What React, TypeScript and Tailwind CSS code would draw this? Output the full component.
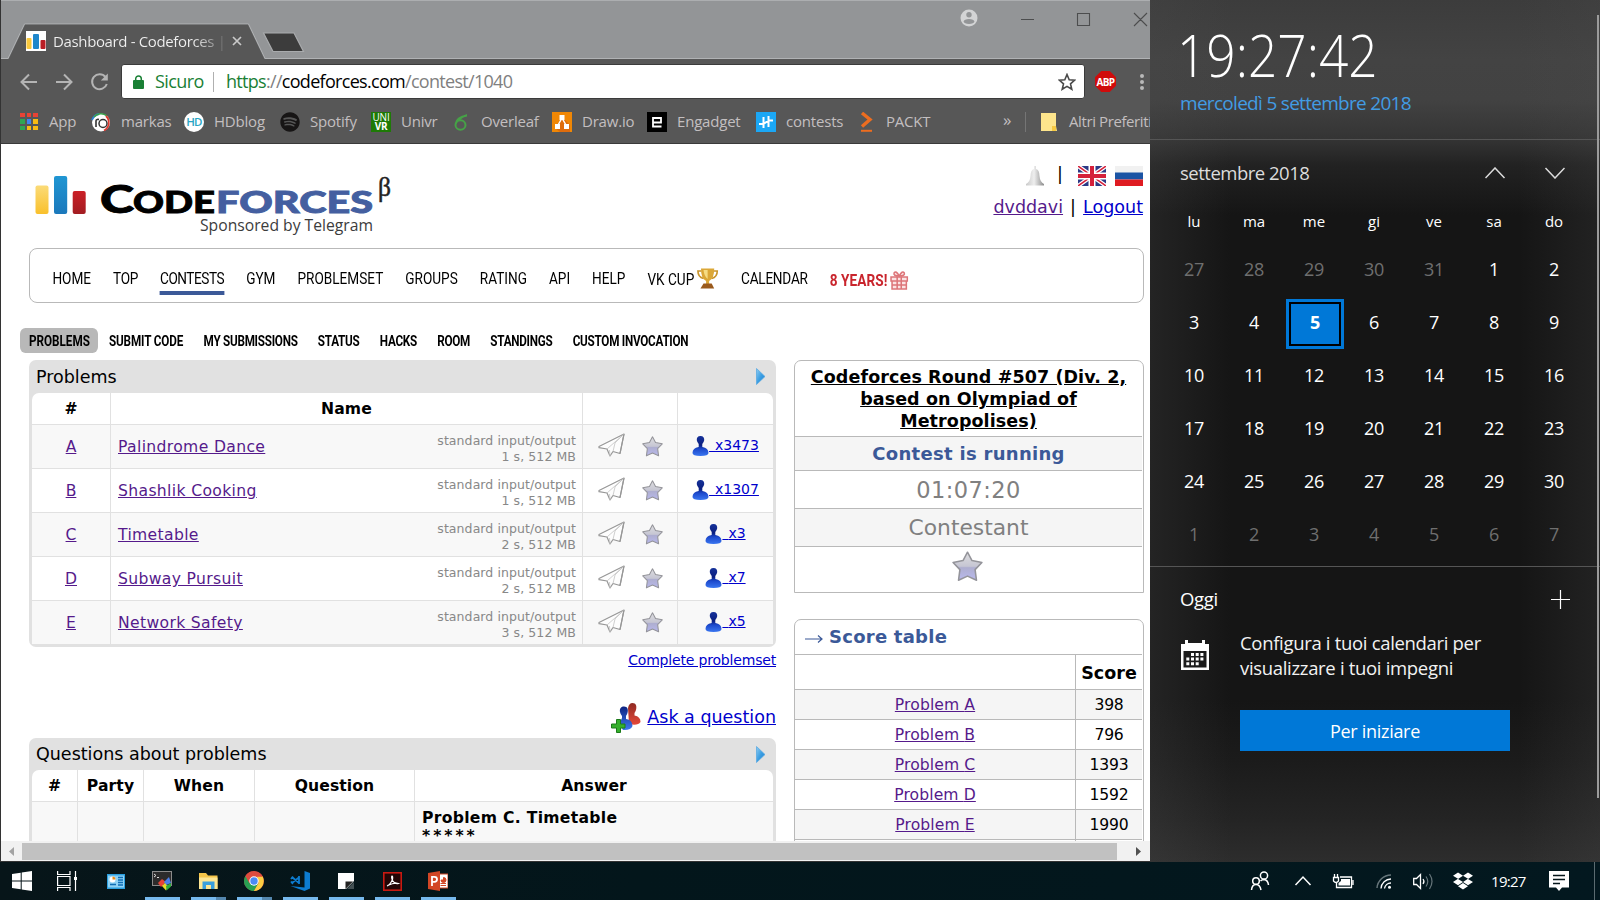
import React from "react";
import { FaDropbox, FaSpotify } from "react-icons/fa";

/* ---------- browser chrome ---------- */

const Bars = ({ className }: { className: string }) => (
  <svg viewBox="0 0 20 20" className={className}>
    <rect width="20" height="20" fill="#fff" />
    <rect x="0.5" y="7" width="5" height="11" rx="1" fill="#f9c83d" />
    <rect x="7" y="3" width="6" height="15" rx="1" fill="#1f87cb" />
    <rect x="14.5" y="9" width="5" height="9" rx="1" fill="#b81e25" />
  </svg>
);

function TitleBar() {
  return (
    <div className="relative h-[59px] bg-[#939597] border-t border-[#acaeb0] flex">
      <svg className="absolute left-0 -top-px" width="1149" height="59" viewBox="1 0 1149 59">
        <path d="M0 58.5H8L24.5 24H248.5L265 58.5H1150" fill="none" stroke="#b0b2b4" />
        <path d="M8.5 59L25 24.5H248L264.5 59Z" fill="#575757" />
        <path d="M263.5 33H294L303.5 51.5H273Z" fill="#3c3c3c" stroke="#a9abad" strokeWidth="1.2" />
        <circle cx="969" cy="18" r="8.5" fill="#d3d4d5" />
        <circle cx="969" cy="14.7" r="2.7" fill="#939597" />
        <ellipse cx="969" cy="21.5" rx="5.3" ry="2.6" fill="#939597" />
        <path d="M1021 19.5H1034M1077.500 13.500H1089.500V25.500H1077.500ZM1134 13L1147 26M1147 13L1134 26" fill="none" stroke="#4c4d4e" strokeWidth="1.1" />
      </svg>
      <div className="relative flex h-[36px] mt-[22px] ml-[25px] w-[222px] items-center">
        <Bars className="size-5 shrink-0" />
        <span className="ml-[7px] w-[170px] shrink-0 whitespace-nowrap overflow-hidden text-[15px] leading-5 tracking-[-0.36px] text-transparent bg-clip-text bg-[linear-gradient(to_right,#f1f1f1_82%,#f1f1f100_104%)]">
          Dashboard - Codeforces |
        </span>
        <svg className="ml-[9px] shrink-0" width="10" height="10" viewBox="0 0 10 10">
          <path d="M1 1L9 9M9 1L1 9" stroke="#c9c9c9" strokeWidth="1.7" />
        </svg>
      </div>
    </div>
  );
}

function AddressBar() {
  return (
    <div className="h-[45px] flex items-center">
      <svg className="ml-[19px] shrink-0" width="92" height="20" viewBox="20 71 92 20" fill="none" stroke="#b4b4b4" strokeWidth="2">
        <path d="M37 81H22M29 73.500L21.500 81L29 88.500" />
        <path d="M56 81H71M64 73.500L71.500 81L64 88.500" />
        <path d="M105.500 76A7.500 7.500 0 1 0 106.800 83" />
        <path d="M107.800 72.500V79.500H100.800Z" fill="#b4b4b4" stroke="none" />
      </svg>
      <div className="ml-[9px] w-[964px] h-[35px] rounded-[3px] border border-[#3b3b3b] bg-white flex items-center">
        <svg className="ml-[11px]" width="11" height="14" viewBox="0 0 11 14">
          <rect y="5" width="11" height="9" rx="1" fill="#1a8035" />
          <path d="M2.700 6V3.800a2.800 2.800 0 0 1 5.600 0V6" fill="none" stroke="#1a8035" strokeWidth="1.500" />
        </svg>
        <span className="ml-[11px] w-[48px] text-[18px] tracking-[-0.6px] text-[#1a8035]">Sicuro</span>
        <span className="ml-[10px] w-px h-5 bg-[#b0b0b0]" />
        <span className="ml-[12px] text-[18px] tracking-[-0.7px] text-[#808080] whitespace-nowrap">
          <span className="text-[#1a8035]">https</span>://<span className="text-black">codeforces.com</span>/contest/1040
        </span>
        <svg className="ml-auto mr-[8px]" width="18" height="18" viewBox="0 0 18 18">
          <path d="M9 1.500L11.200 6.700L16.700 7.200L12.500 10.900L13.800 16.300L9 13.400L4.200 16.300L5.500 10.900L1.300 7.200L6.800 6.700Z" fill="none" stroke="#4a4a4a" strokeWidth="1.600" />
        </svg>
      </div>
      <div className="ml-[10px] size-[21px] bg-[#d00b0b] flex items-center justify-center [clip-path:polygon(30%_0,70%_0,100%_30%,100%_70%,70%_100%,30%_100%,0_70%,0_30%)]">
        <span className="text-[10px] font-bold leading-none text-white tracking-[-0.6px]">ABP</span>
      </div>
      <div className="ml-[24px] flex flex-col gap-[2px]">
        <i className="size-1 rounded-full bg-[#b9b9b9]" />
        <i className="size-1 rounded-full bg-[#b9b9b9]" />
        <i className="size-1 rounded-full bg-[#b9b9b9]" />
      </div>
    </div>
  );
}

const appColors = ["#e94335", "#e94335", "#e94335", "#30a552", "#3f83f2", "#f9bb14", "#30a552", "#f9bb14", "#f9bb14"];

const bookmarks: { label: string; width: string; icon: React.ReactNode }[] = [
  {
    label: "App",
    width: "w-[72px]",
    icon: (
      <span className="grid grid-cols-3 gap-[2px]">
        {appColors.map((c, i) => (
          <i key={i} className="size-[4.500px]" style={{ background: c }} />
        ))}
      </span>
    ),
  },
  {
    label: "markas",
    width: "w-[93px]",
    icon: (
      <svg viewBox="0 0 20 20" className="size-5">
        <circle cx="10" cy="10.500" r="9" fill="#fff" />
        <path d="M1 8A9.500 9.500 0 0 1 8 2" stroke="#2d7fd0" strokeWidth="1.800" fill="none" />
        <path d="M3 5A9 9 0 0 1 16 4" stroke="#3ba24b" strokeWidth="1.600" fill="none" />
        <path d="M15 4A9 9 0 0 1 13 18.500" stroke="#dd3a31" strokeWidth="1.800" fill="none" />
        <path d="M5 15V9Q5 7 8 7.500" stroke="#333" strokeWidth="1.600" fill="none" />
        <circle cx="12" cy="11.500" r="4" stroke="#333" strokeWidth="1.500" fill="none" />
      </svg>
    ),
  },
  {
    label: "HDblog",
    width: "w-[96px]",
    icon: (
      <span className="size-5 rounded-full bg-white text-[#29a5c4] text-[11.500px] tracking-[-0.7px] font-semibold flex items-center justify-center">HD</span>
    ),
  },
  {
    label: "Spotify",
    width: "w-[91px]",
    icon: <FaSpotify className="size-5 text-[#171515]" />,
  },
  {
    label: "Univr",
    width: "w-[80px]",
    icon: (
      <span className="size-5 bg-[#1e7a06] text-white text-[10px] leading-[9px] flex flex-col items-center justify-center">
        <span>UNI</span>
        <b>VR</b>
      </span>
    ),
  },
  {
    label: "Overleaf",
    width: "w-[101px]",
    icon: (
      <svg viewBox="0 0 20 20" className="size-5" fill="none" stroke="#46a247" strokeWidth="2">
        <ellipse cx="9.500" cy="13" rx="5" ry="4.800" />
        <path d="M4.700 12Q5.500 5 16 3.500Q11 4 8 8" />
      </svg>
    ),
  },
  {
    label: "Draw.io",
    width: "w-[95px]",
    icon: (
      <svg viewBox="0 0 20 20" className="size-5">
        <rect width="20" height="20" fill="#f08705" />
        <path d="M10 5L18 13V20H8L3 16Z" fill="#df6c0c" />
        <path d="M10 6L5.500 14M10 6L14.500 14" stroke="#fff" strokeWidth="1.500" />
        <rect x="7.500" y="3" width="5" height="5" fill="#fff" />
        <rect x="3" y="12" width="5" height="5" fill="#fff" />
        <rect x="12" y="12" width="5" height="5" fill="#fff" />
      </svg>
    ),
  },
  {
    label: "Engadget",
    width: "w-[109px]",
    icon: (
      <svg viewBox="0 0 20 20" className="size-5">
        <rect width="20" height="20" fill="#000" />
        <path d="M6 10.500H14V6H6V14.500H14.500" stroke="#fff" strokeWidth="1.800" fill="none" />
      </svg>
    ),
  },
  {
    label: "contests",
    width: "w-[100px]",
    icon: (
      <svg viewBox="0 0 20 20" className="size-5">
        <rect width="20" height="20" fill="#1ba7f5" />
        <path d="M7.500 5V16M12.500 4V15M3 12H8M7.500 12L12.500 8.500M12 8.500H17" stroke="#fff" strokeWidth="2" />
      </svg>
    ),
  },
  {
    label: "PACKT",
    width: "w-[80px]",
    icon: (
      <svg viewBox="0 0 20 20" className="size-5" stroke="#ec6d20" fill="none">
        <path d="M6 1L14 7.500L6 14.500" strokeWidth="3.400" />
        <path d="M5 18.800H16" strokeWidth="2" />
      </svg>
    ),
  },
];

function Bookmarks() {
  return (
    <div className="h-[40px] border-b border-[#3a3a3a] flex items-center pl-[18px] pb-[4px] overflow-hidden text-[15px] tracking-[-0.2px] text-[#c3bfc0] whitespace-nowrap">
      {bookmarks.map((b) => (
        <div key={b.label} className={`${b.width} shrink-0 flex items-center gap-[10px]`}>
          <span className="w-5 flex justify-center">{b.icon}</span>
          <span>{b.label}</span>
        </div>
      ))}
      <span className="ml-[67px] text-[17px] leading-5 w-[22px] shrink-0 pb-1">»</span>
      <span className="w-px h-5 bg-[#757575] shrink-0" />
      <svg className="ml-[15px] shrink-0" width="16" height="18" viewBox="0 0 16 18">
        <path d="M0 0H15V13L16 18H0Z" fill="#fde58c" />
        <path d="M11 18V13H15V18" fill="#f6c942" />
      </svg>
      <span className="ml-[12px] shrink-0 tracking-[-0.4px]">Altri Preferiti</span>
    </div>
  );
}

/* ---------- page ---------- */

const CfLogo = () => (
  <svg className="ml-[34px] mt-[30px]" width="360" height="66" viewBox="35 174 360 66">
    <defs>
      <linearGradient id="ly" x2="0" y2="1"><stop stopColor="#fbdb78" /><stop offset="1" stopColor="#f9c02b" /></linearGradient>
      <linearGradient id="lb" x2="0" y2="1"><stop stopColor="#2096d3" /><stop offset="1" stopColor="#1b78bb" /></linearGradient>
      <linearGradient id="lr" x2="0" y2="1"><stop stopColor="#cb2027" /><stop offset="1" stopColor="#a21d22" /></linearGradient>
    </defs>
    <rect x="35.500" y="185.500" width="13" height="28.500" rx="2" fill="url(#ly)" />
    <rect x="54" y="176" width="13.200" height="38" rx="2" fill="url(#lb)" />
    <rect x="72.700" y="191" width="13" height="23" rx="2" fill="url(#lr)" />
    <g fontFamily="Lato, sans-serif" fontWeight="900" strokeWidth="0.900">
      <text x="100" y="213.300" fontSize="38" textLength="34" lengthAdjust="spacingAndGlyphs" stroke="#000">C</text>
      <text x="133" y="213.300" fontSize="31" textLength="82" lengthAdjust="spacingAndGlyphs" stroke="#000">ODE</text>
      <text x="216" y="213.300" fontSize="31" textLength="157" lengthAdjust="spacingAndGlyphs" fill="#445fa0" stroke="#445fa0">FORCES</text>
    </g>
    <text x="378" y="196" fontFamily="Liberation Serif, serif" fontSize="27" textLength="13" lengthAdjust="spacingAndGlyphs" fill="#222" stroke="#222" strokeWidth="0.500">β</text>
    <text x="200" y="231" fontFamily="Open Sans, sans-serif" fontSize="17" fontWeight="500" textLength="173" lengthAdjust="spacingAndGlyphs" fill="#3c3c3c">Sponsored by Telegram</text>
  </svg>
);

function UserBox() {
  return (
    <div className="ml-auto mr-[6px] mt-[20px] flex flex-col items-end text-[17.500px]">
      <div className="flex h-[24px] items-center pr-px">
        <svg width="20" height="22" viewBox="0 0 20 22">
          <defs><linearGradient id="bell"><stop stopColor="#c9c9c9" /><stop offset=".45" stopColor="#eee" /><stop offset="1" stopColor="#8d8d8d" /></linearGradient></defs>
          <path d="M9 1H11V4Q14.500 5 14.500 11Q15 17 19 19V20.500H1V19Q5 17 5.500 11Q5.500 5 9 4Z" fill="url(#bell)" />
        </svg>
        <span className="ml-[12px] leading-5 w-[6px] pb-1">|</span>
        <svg className="ml-[15px]" width="28" height="20" viewBox="0 0 28 20">
          <rect width="28" height="20" fill="#2c3a86" />
          <path d="M0 0L28 20M28 0L0 20" stroke="#fff" strokeWidth="4" />
          <path d="M0 0L28 20M28 0L0 20" stroke="#d5203a" strokeWidth="1.500" />
          <path d="M14 0V20M0 10H28" stroke="#fff" strokeWidth="7" />
          <path d="M14 0V20M0 10H28" stroke="#d5203a" strokeWidth="4" />
        </svg>
        <svg className="ml-[9px]" width="28" height="20" viewBox="0 0 28 20">
          <rect width="28" height="7" fill="#f1f1f1" />
          <rect y="6.500" width="28" height="7" fill="#1b54a4" />
          <rect y="13.500" width="28" height="6.500" fill="#df1b21" />
        </svg>
      </div>
      <div className="mt-[7px] pr-px leading-6 whitespace-pre">
        <a className="underline text-[#551a8b]">dvddavi</a><span className="px-[1.500px]"> | </span><a className="underline text-[#0000cc]">Logout</a>
      </div>
    </div>
  );
}

const Trophy = () => (
  <svg width="28" height="21" viewBox="0 0 22 21" preserveAspectRatio="none">
    <path d="M5 3H1.500Q1.500 9 7 10.500M17 3H20.500Q20.500 9 15 10.500" fill="none" stroke="#c9942a" strokeWidth="1.600" />
    <path d="M4.500 0.500H17.500Q17.500 11 12.500 13V16H9.500V13Q4.500 11 4.500 0.500Z" fill="#dba737" />
    <path d="M7 2H11V11Q7.500 8 7 2Z" fill="#f6dc83" />
    <path d="M7 15.500H15L17.500 20.500H4Z" fill="#9a5a1c" />
  </svg>
);

const Gift = () => (
  <svg width="23" height="20" viewBox="0 0 18 20" preserveAspectRatio="none" fill="#fbe3e3" stroke="#dd7579" strokeWidth="1.500">
    <path d="M1 7H17V11H1ZM2 11H16V19H2ZM7 7V19M11 7V19M2 15H16" />
    <path d="M9 6Q3 6 4 3Q6 0 9 6Q12 0 14 3Q15 6 9 6" />
  </svg>
);

function Menu() {
  return (
    <nav className="ml-[28px] w-[1115px] h-[55px] shrink-0 rounded-[8px] border border-[#b9b9b9]">
      <div className="origin-left scale-x-[0.800] w-[1300px] h-full pl-[28px] pt-[5px] flex items-center gap-[27.500px] font-['Roboto',sans-serif] text-[17px] leading-6 whitespace-nowrap">
        <a>HOME</a>
        <a className="tracking-[-0.4px]">TOP</a>
        <a className="border-b-4 border-[#3b5998] h-[34px] mt-[-1px] pt-[7px] leading-[20px] tracking-[-0.550px]">CONTESTS</a>
        <a>GYM</a>
        <a>PROBLEMSET</a>
        <a>GROUPS</a>
        <a>RATING</a>
        <a>API</a>
        <a>HELP</a>
        <a className="flex items-center gap-[3px] pt-px">VK CUP <Trophy /></a>
        <a className="tracking-[-0.300px]">CALENDAR</a>
        <a className="flex items-center gap-[3px] pt-[3px] font-bold text-[#c9252d] tracking-[0.1px]">8 YEARS! <Gift /></a>
      </div>
    </nav>
  );
}

const second = ["MY SUBMISSIONS", "STATUS", "HACKS", "ROOM", "STANDINGS", "CUSTOM INVOCATION"];

function SubMenu() {
  return (
    <div className="mt-[25px] ml-[19px] h-[25px] shrink-0 origin-left scale-x-[0.780] w-[1300px] flex items-center gap-[26px] font-['Roboto',sans-serif] font-bold text-[15px] whitespace-nowrap">
      <a className="h-[25px] w-[100px] flex items-center justify-center rounded-[7px/6px] bg-[#b8b8b8] -mr-[12px] pt-[2px] pl-px">PROBLEMS</a>
      <a className="pt-[2px] tracking-[-0.150px]">SUBMIT CODE</a>
      {second.map((s) => (
        <a key={s} className="pt-[2px] tracking-[-0.330px]">{s}</a>
      ))}
    </div>
  );
}

const BlueArrow = () => (
  <svg width="10" height="17" viewBox="0 0 10 17">
    <defs><linearGradient id="ba" x2="1" y2="1"><stop stopColor="#8fcdf2" /><stop offset=".5" stopColor="#3b9ee2" /><stop offset="1" stopColor="#1f7fd0" /></linearGradient></defs>
    <path d="M0.500 0.500L9 8.500L0.500 16.500Z" fill="url(#ba)" stroke="#5aa9e2" strokeWidth=".8" />
  </svg>
);

const Plane = () => (
  <svg width="27" height="24" viewBox="0 0 27 24" fill="#fdfdfd" stroke="#979797" strokeWidth="1.200" strokeLinejoin="round">
    <path d="M26 1L1 13.500V14.700L9 16L12 23L15 18.500L22 20.500Z" />
    <path d="M26 1L9 16M15 18.500L17 10L26 1M12 23L11.500 17" fill="none" stroke="#c9c9c9" strokeWidth=".9" />
    <path d="M26 1L22 20.500" />
  </svg>
);

const Star = ({ className }: { className: string }) => (
  <svg viewBox="0 0 20 20" className={className}>
    <defs><linearGradient id="st" x2="0" y2="1"><stop stopColor="#dededf" /><stop offset=".5" stopColor="#c6c6d3" /><stop offset=".55" stopColor="#aeaecf" /><stop offset="1" stopColor="#b9b9ee" /></linearGradient></defs>
    <path d="M10 0.800L12.900 6.200L19.300 7.400L14.900 12L15.800 18.900L10 16.200L4.200 18.900L5.100 12L0.700 7.400L7.100 6.200Z" fill="url(#st)" stroke="#94949a" strokeWidth="1" strokeLinejoin="round" />
  </svg>
);

const Person = () => (
  <svg width="17" height="20" viewBox="0 0 17 20">
    <defs><linearGradient id="pb" x2="0" y2="1"><stop stopColor="#16329a" /><stop offset=".45" stopColor="#0b1f80" /><stop offset=".65" stopColor="#1c49cc" /><stop offset="1" stopColor="#3a76f0" /></linearGradient></defs>
    <path d="M8.500 0C11.300 0 12.500 2 12.200 4.300Q11.800 6.500 10.300 8V11Q16.500 12 16.500 17Q16.500 20 8.500 20Q0.500 20 0.500 17Q0.500 12 6.700 11V8Q5.200 6.500 4.800 4.300C4.500 2 5.700 0 8.500 0Z" fill="url(#pb)" />
  </svg>
);

const problems = [
  ["A", "Palindrome Dance", "1 s, 512 MB", "x3473"],
  ["B", "Shashlik Cooking", "1 s, 512 MB", "x1307"],
  ["C", "Timetable", "2 s, 512 MB", "x3"],
  ["D", "Subway Pursuit", "2 s, 512 MB", "x7"],
  ["E", "Network Safety", "3 s, 512 MB", "x5"],
];

function ProblemsTable() {
  return (
    <section className="h-[287px] rounded-[7px] bg-[#e1e1e1] px-[3px]">
      <div className="h-[33px] flex items-center justify-between pl-1 pr-[7px] text-[17.500px]">
        <span className="pt-px">Problems</span> <BlueArrow />
      </div>
      <div className="h-[251px] rounded-t-[7px] bg-white overflow-hidden text-[15.600px]">
        <div className="h-[31px] grid grid-cols-[79px_472px_95px_95px] font-bold text-center leading-[33px]">
          <span className="border-r border-[#e1e1e1]">#</span>
          <span className="border-r border-[#e1e1e1] tracking-[0.100px]">Name</span>
          <span className="border-r border-[#e1e1e1]" />
          <span />
        </div>
        {problems.map(([id, name, limits, count]) => (
          <div key={id} className="h-11 grid grid-cols-[79px_472px_95px_95px] border-t border-[#e1e1e1] odd:bg-white even:bg-[#f8f8f8]">
            <span className="border-r border-[#e1e1e1] flex items-center justify-center pt-[3px]"><a className="underline text-[#551a8b]">{id}</a></span>
            <span className="border-r border-[#e1e1e1] flex items-center pl-[7px] pr-[6px] pt-[3px]">
              <a className="underline text-[#551a8b] tracking-[0.350px]">{name}</a>
              <span className="ml-auto text-right text-[12.500px] leading-4 text-[#888] pt-[1px] tracking-[0.080px]">standard input/output<br />{limits}</span>
            </span>
            <span className="border-r border-[#e1e1e1] flex items-center pl-[15px] gap-[17px]"><span className="-mt-1"><Plane /></span><Star className="size-[21px] mt-[-1px]" /></span>
            <span className="flex items-center justify-center text-[14px] pb-[2px]">
              <Person />
              <a className="underline text-[#0000cc] whitespace-pre [word-spacing:1.500px]"> {count}</a>
            </span>
          </div>
        ))}
      </div>
    </section>
  );
}

const AskIcon = () => (
  <svg width="30" height="30" viewBox="0 0 30 30">
    <defs>
      <linearGradient id="ar" x2="0" y2="1"><stop stopColor="#8f2a22" /><stop offset="1" stopColor="#e5483a" /></linearGradient>
      <linearGradient id="ab" x2="0" y2="1"><stop stopColor="#0d2280" /><stop offset="1" stopColor="#3f7af0" /></linearGradient>
    </defs>
    <path d="M21.500 0C25 0 25.800 3 25.200 6Q24.800 8.500 23.500 10V12.500Q29.500 13.500 29.500 19Q27 23 18 21L17 5Q18 0 21.500 0Z" fill="url(#ar)" />
    <path d="M13 3.500C16.500 3.500 17.300 6.500 16.700 9Q16.300 11.500 15 13V16Q21.500 17 21.500 23Q20 27.500 12 27L8 21L11 15V13Q9.500 11.500 9 9C8.500 6 9.500 3.500 13 3.500Z" fill="url(#ab)" />
    <path d="M5.500 16.500H9.500V21H14V25H9.500V29.500H5.500V25H0.500V21H5.500Z" fill="#35b02c" stroke="#1c7a1a" />
  </svg>
);

function QuestionsTable() {
  return (
    <section className="h-[120px] rounded-t-[7px] bg-[#e1e1e1] px-[3px]">
      <div className="h-[32px] flex items-center justify-between pl-1 pr-[7px] text-[17.500px]">
        <span className="pt-px">Questions about problems</span> <BlueArrow />
      </div>
      <div className="rounded-t-[7px] bg-white overflow-hidden text-[15.600px] font-bold">
        <div className="h-[31px] grid grid-cols-[46px_66px_111px_160px_358px] text-center leading-[33px]">
          {["#", "Party", "When", "Question", "Answer"].map((h) => (
            <span key={h} className="border-r border-[#e1e1e1] last:border-0 tracking-[0.100px]">{h}</span>
          ))}
        </div>
        <div className="h-[60px] grid grid-cols-[46px_66px_111px_160px_358px] border-t border-[#e1e1e1] bg-[#f8f8f8]">
          <span className="border-r border-[#e1e1e1]" />
          <span className="border-r border-[#e1e1e1]" />
          <span className="border-r border-[#e1e1e1]" />
          <span className="border-r border-[#e1e1e1]" />
          <span className="pl-[7px] pt-[7px] leading-[18px] tracking-[0.300px]">Problem C. Timetable<br /><span className="tracking-[3px]">*****</span></span>
        </div>
      </div>
    </section>
  );
}

const scores = [["A", "398"], ["B", "796"], ["C", "1393"], ["D", "1592"], ["E", "1990"], ["F", "2388"]];

function Sidebar() {
  return (
    <aside className="w-[350px] ml-[18px] flex flex-col text-center">
      <div className="h-[233px] border border-[#b9b9b9] rounded-t-[7px] pr-px">
        <div className="h-[75px] pt-[5px] text-[17.500px] leading-[22px] font-bold underline tracking-[0.090px]">
          Codeforces Round #507 (Div. 2,<br />based on Olympiad of<br />Metropolises)
        </div>
        <div className="h-[34px] border-t border-[#b9b9b9] bg-[#f5f5f5] text-[18px] leading-[34px] font-bold text-[#3b5998] tracking-[0.300px]">Contest is running</div>
        <div className="h-[38px] border-t border-[#b9b9b9] text-[22.500px] leading-[38px] text-[#808080] tracking-[0.400px]">01:07:20</div>
        <div className="h-[38px] border-t border-[#b9b9b9] bg-[#f5f5f5] text-[21.800px] leading-[38px] text-[#808080]">Contestant</div>
        <div className="border-t border-[#b9b9b9] flex justify-center pt-1 pr-[2px]"><Star className="size-[31px]" /></div>
      </div>
      <div className="mt-[26px] h-[300px] border border-[#b9b9b9] rounded-t-[7px] pr-px">
        <div className="h-[34px] pl-[10px] pb-px text-left text-[18px] leading-[33px] font-bold text-[#3b5998] flex items-center tracking-[0.250px]">
          <svg width="18" height="10" viewBox="0 0 18 10" className="mr-[6px] mt-1"><path d="M0 5H17M13 1.500L17 5L13 8.500" fill="none" stroke="#3b5998" strokeWidth="1.200" /></svg>
          Score table
        </div>
        <div className="h-[35px] grid grid-cols-[281px_1fr] border-t border-[#b9b9b9] text-[17.500px] leading-[37px] font-bold">
          <span className="border-r border-[#b9b9b9]" />
          <span>Score</span>
        </div>
        {scores.map(([id, value]) => (
          <div key={id} className="h-[30px] grid grid-cols-[281px_1fr] border-t border-[#b9b9b9] text-[15.600px] leading-[31px] odd:bg-[#f5f5f5] even:bg-white">
            <span className="border-r border-[#b9b9b9] tracking-[0.100px]"><a className="underline text-[#551a8b]">Problem {id}</a></span>
            <span className="tracking-[-0.200px]">{value}</span>
          </div>
        ))}
      </div>
    </aside>
  );
}

function Page() {
  return (
    <main className="h-[697px] bg-white overflow-hidden flex flex-col font-['DejaVu_Sans',sans-serif] text-black">
      <header className="h-[104px] shrink-0 flex">
        <CfLogo />
        <UserBox />
      </header>
      <Menu />
      <SubMenu />
      <div className="mt-[7px] ml-[28px] flex">
        <div className="w-[747px] flex flex-col">
          <ProblemsTable />
          <a className="self-end mt-[3px] text-[14px] leading-5 underline text-[#0000cc] tracking-[-0.180px]">Complete problemset</a>
          <div className="mt-[33px] mb-[5px] h-[30px] flex justify-end items-center gap-[6px] text-[17.500px]">
            <AskIcon />
            <a className="underline text-[#0000cc] pb-px">Ask a question</a>
          </div>
          <QuestionsTable />
        </div>
        <Sidebar />
      </div>
    </main>
  );
}

function HScroll() {
  return (
    <div className="h-[20px] shrink-0 bg-[#f1f1f1] flex items-center">
      <svg className="ml-2 mr-[8px]" width="5" height="9" viewBox="0 0 5 9"><path d="M5 0V9L0 4.500Z" fill="#a3a3a3" /></svg>
      <div className="w-[1095px] h-[17px] bg-[#c1c1c1]" />
      <svg className="ml-[19px]" width="5" height="9" viewBox="0 0 5 9"><path d="M0 0V9L5 4.500Z" fill="#505050" /></svg>
    </div>
  );
}

/* ---------- clock flyout ---------- */

const days = [27, 28, 29, 30, 31, ...Array.from({ length: 30 }, (_, i) => i + 1), 1, 2, 3, 4, 5, 6, 7];

function Flyout() {
  return (
    <aside className="relative w-[450px] h-[862px] text-white bg-[linear-gradient(to_right,#4a4a4a48,#4a4a4a00_18%,#4a4a4a00_82%,#4a4a4a40),linear-gradient(to_bottom,#3c3c3c_0,#434343_60px,#424242_100px,#343434_139px,#222_165px,#151515_215px,#151515_700px,#1b1b1b_760px,#242424_820px,#2d2d2d_862px)]">
      <i className="absolute left-[447px] top-[15px] w-[1.500px] h-[783px] bg-[#9b9b9b]" />
      <div className="h-[139px] pl-[30px] pt-[15px]">
        <div className="ml-[-3px] text-[58px] leading-[80px] h-[74px] font-light origin-left scale-x-[0.887] whitespace-nowrap">19:27:42</div>
        <div className="text-[19px] leading-7 text-[#429ce3] tracking-[-0.700px]">mercoledì 5 settembre 2018</div>
      </div>
      <div className="h-[428px] border-y border-[#555]">
        <div className="h-[66px] pl-[30px] pr-[35px] flex items-center text-[18.500px] tracking-[-0.500px] text-[#dcdcdc]">
          settembre 2018
          <svg className="ml-auto" width="80" height="12" viewBox="0 0 80 12" fill="none" stroke="#dcdcdc" strokeWidth="1.500">
            <path d="M0.500 11L10 1L19.500 11M60.500 1L70 11L79.500 1" />
          </svg>
        </div>
        <div className="w-[420px] ml-[14px] grid grid-cols-7 text-center text-[15px] leading-[31px] h-[38px]">
          {["lu", "ma", "me", "gi", "ve", "sa", "do"].map((d) => (
            <span key={d}>{d}</span>
          ))}
        </div>
        <div className="w-[420px] ml-[14px] grid grid-cols-7 text-center text-[18px] tracking-[-0.300px]">
          {days.map((d, i) =>
            i === 9 ? (
              <span key={i} className="h-[53px] flex items-center justify-center">
                <b className="w-[58px] shrink-0 ml-[2px] h-[50px] border-3 border-[#0078d7] bg-black p-[2px]">
                  <span className="block bg-[#0078d7] h-full leading-[37px]">{d}</span>
                </b>
              </span>
            ) : (
              <span key={i} className={`h-[53px] leading-[50px] ${i < 5 || i > 34 ? "text-[#6f6f6f]" : "text-white"}`}>{d}</span>
            ),
          )}
        </div>
      </div>
      <div className="h-[65px] pl-[30px] pr-[30px] flex items-center justify-between text-[18.500px] tracking-[-0.300px]">
        <span className="pb-[2px]">Oggi</span>
        <svg width="19" height="19" viewBox="0 0 19 19"><path d="M9.500 0V19M0 9.500H19" stroke="#fff" strokeWidth="1.200" /></svg>
      </div>
      <div className="pl-[31px] flex">
        <svg className="mt-[8px] w-[28px] mr-[31px]" height="30" viewBox="0 0 28 30" fill="#fff">
          <path d="M0 4H4V0H7V3H21V0H24V4H28V30H0ZM2.500 11V27.500H25.500V11Z" fillRule="evenodd" />
          <path d="M10 13h3v3h-3zM14.700 13h3v3h-3zM19.400 13h3v3h-3zM5.300 17.500h3v3h-3zM10 17.500h3v3h-3zM14.700 17.500h3v3h-3zM19.400 17.500h3v3h-3zM5.300 22.200h3v3h-3zM10 22.200h3v3h-3zM14.700 22.200h3v3h-3z" />
        </svg>
        <div>
          <p className="-mt-[2px] text-[18.500px] leading-[25px] tracking-[-0.320px] whitespace-nowrap text-[#f2f2f2] h-[80px]">Configura i tuoi calendari per<br />visualizzare i tuoi impegni</p>
          <button className="w-[270px] h-[41px] bg-[#0078d7] text-[18px] tracking-[-0.300px] pt-px">Per iniziare</button>
        </div>
      </div>
    </aside>
  );
}

/* ---------- taskbar ---------- */

const tasks: { run: number; icon: React.ReactNode }[] = [
  {
    run: 0,
    icon: (
      <svg width="20" height="20" viewBox="0 0 20 20" fill="#fff"><path d="M0 3L8.700 1.800V9.500H0ZM9.700 1.600L20 0V9.500H9.700ZM0 10.500H8.700V18.200L0 17ZM9.700 10.500H20V20L9.700 18.400Z" /></svg>
    ),
  },
  {
    run: 0,
    icon: (
      <svg width="20" height="20" viewBox="0 0 20 20" fill="none" stroke="#fff" strokeWidth="1.200"><path d="M0.600 0V3.500H13V0M0.600 20V16.500H13V20M0.600 5.500H13V14.500H0.600ZM18.500 0V20" /><path d="M17 6h3v3h-3z" fill="#fff" stroke="none" /></svg>
    ),
  },
  {
    run: 0,
    icon: (
      <svg width="18" height="15" viewBox="0 0 18 15"><rect width="18" height="15" fill="#2b9fdf" /><rect x="1" y="1.500" width="16" height="12" fill="#8fd2f5" /><circle cx="5.500" cy="5.500" r="3" fill="#fff" /><path d="M5.500 5.500V2.500A3 3 0 0 1 8.500 5.500Z" fill="#e88a1a" /><path d="M11 3.500H16M11 6H16M3 10.500H9M11 8.500H16M11 11H16" stroke="#0f6db5" strokeWidth="1.300" /></svg>
    ),
  },
  {
    run: 1,
    icon: (
      <svg width="20" height="20" viewBox="0 0 20 20"><rect x=".5" y=".5" width="19" height="14" fill="#2c2c2c" stroke="#8b8b8b" /><path d="M2 3L4 4.500L2 6M5 6.500H7" stroke="#ddd" fill="none" /><path d="M6 12L10 8L14 11L9 16Z" fill="#e84335" /><path d="M12 11L17 6L19 12L14 14Z" fill="#4a7fe8" /><path d="M10 15L13 12L16 16L14 19.500Z" fill="#e9d92a" /><path d="M14 15L19 12V15.500L14.500 19.500Z" fill="#2faa3c" /></svg>
    ),
  },
  {
    run: 2,
    icon: (
      <svg width="19" height="17" viewBox="0 0 19 17"><path d="M0 0H7L9 2.500H18.500V16H0Z" fill="#f5c64a" /><path d="M1 4.500H18.500V16H0V4.500Z" fill="#fde693" /><path d="M3.500 16V8.500H15.500V16H12V12H7V16Z" fill="#3a9fdc" /></svg>
    ),
  },
  {
    run: 2,
    icon: (
      <svg width="20" height="20" viewBox="0 0 20 20">
        <circle cx="10" cy="10" r="10" fill="#dd4b3e" />
        <path d="M1.340 5A10 10 0 0 0 10 20L14.330 12.500L10 10Z" fill="#28a052" />
        <path d="M18.660 5.500A10 10 0 0 1 10 20L14.500 12L13 5.500Z" fill="#fdcd42" />
        <path d="M1.340 5A10 10 0 0 1 18.660 5.500H10L5.600 12.500Z" fill="#dd4b3e" />
        <circle cx="10" cy="10" r="4.700" fill="#fff" />
        <circle cx="10" cy="10" r="3.700" fill="#4a8af4" />
      </svg>
    ),
  },
  {
    run: 1,
    icon: (
      <svg width="20" height="20" viewBox="0 0 20 20"><path d="M14.500 0L20 2V17.500L14.500 20L0.500 15L14.500 16.500Z" fill="#0d7cd0" /><path d="M2 6L9.500 12.500M2 12L9.500 6M9 5V13M1 8L3 5.500M1 10.500L3 13" fill="none" stroke="#0d7cd0" strokeWidth="1.800" /></svg>
    ),
  },
  {
    run: 1,
    icon: (
      <svg width="16" height="16" viewBox="0 0 16 16"><path d="M0 0H16V8L8 16H0Z" fill="#fff" /><path d="M7.500 8.500H15L7.500 16Z" fill="#222" /><path d="M16 9V16H9Z" fill="#fff" opacity=".25" /></svg>
    ),
  },
  {
    run: 1,
    icon: (
      <svg width="19" height="19" viewBox="0 0 19 19"><rect x=".8" y=".8" width="17.400" height="17.400" fill="#220606" stroke="#c81a12" strokeWidth="1.600" /><path d="M4 14Q7 13 9.500 7.500Q10 4 9 4Q8 4.500 9.500 8.500Q12 12.500 15.500 11.500Q12 10 4.500 13.500" fill="none" stroke="#fff" strokeWidth="1.200" /></svg>
    ),
  },
  {
    run: 1,
    icon: (
      <svg width="20" height="20" viewBox="0 0 20 20"><rect x="10" y="3" width="10" height="14" fill="#fff" stroke="#d24625" /><path d="M13 9a2.500 2.500 0 1 0 2.500-2.500V9ZM12.500 12.500H18M12.500 14.500H18" fill="#d24625" stroke="#d24625" /><path d="M0 2L12 0V20L0 18Z" fill="#d24625" /><path d="M4 15V5.800H6.500Q9 5.800 9 8.300Q9 10.800 6.500 10.800H4" fill="none" stroke="#fff" strokeWidth="1.800" /></svg>
    ),
  },
];

function Taskbar() {
  return (
    <footer className="h-[38px] flex bg-[linear-gradient(to_right,#071519,#03161b_40%,#03181f)] text-white">
      <div className="flex">
        {tasks.map((t, i) => (
          <div key={i} className={`relative h-[38px] flex items-center justify-center ${t.run ? "pr-[6px]" : ""} ${i === 0 ? "w-[44px]" : i === 1 ? "w-[46px]" : i === 2 ? "w-[52px]" : "w-[46px]"}`}>
            {t.icon}
            {t.run > 0 && (
              <span className="absolute bottom-0 left-[3px] w-[35px] h-[3px] bg-[#76b9ed] flex justify-end">
                {t.run === 2 && <i className="w-[10px] h-full bg-[#5487ae]" />}
              </span>
            )}
          </div>
        ))}
      </div>
      <div className="ml-auto flex items-center h-[38px]">
        <svg width="185" height="22" viewBox="1250 870 185 22" fill="none" stroke="#fff" strokeWidth="1.500">
          <circle cx="1264" cy="875.500" r="3.600" />
          <circle cx="1256" cy="881" r="3.300" />
          <path d="M1251.500 890Q1252 884.500 1256 884.500Q1260 884.500 1261 890M1260.500 881Q1262 879.500 1264 879.500Q1268 880 1268.500 885" />
          <path d="M1295.500 885L1303 877L1310.500 885" />
          <path d="M1340 877H1351.500V887.500H1336.500V883M1333.500 877.500H1338.500V881Q1336 884 1333.500 881ZM1334.500 877V874M1337.500 877V874M1353 880V885" strokeWidth="1.300" />
          <path d="M1341 879H1350V885.500H1338.500V883L1341 881Z" fill="#fff" stroke="none" />
          <path d="M1377 888A14 14 0 0 1 1391 875" stroke="#66757a" />
          <path d="M1381 888.500A10 10 0 0 1 1391 879M1384.500 888.500A6.500 6.500 0 0 1 1391 883" strokeWidth="1.300" />
          <circle cx="1389.500" cy="887.300" r="1.500" fill="#fff" stroke="none" />
          <path d="M1413.700 878.500H1416.500L1420.500 874.500V888.500L1416.500 884.500H1413.700Z" strokeWidth="1.300" />
          <path d="M1423 879Q1425 881.500 1423 884" strokeWidth="1.200" />
          <path d="M1426 876.500Q1429.500 881.500 1426 886.500M1429.500 874Q1434.500 881.500 1429.500 889" stroke="#66757a" strokeWidth="1.200" />
        </svg>
        <FaDropbox className="ml-[18px] size-5" />
        <span className="ml-[18px] w-[39px] text-[15px] tracking-[-0.700px]">19:27</span>
        <svg className="ml-[19px]" width="20" height="20" viewBox="0 0 20 20"><path d="M0 0H20V16.500H13L10 20L7 16.500H0Z" fill="#fff" /><path d="M4 4.500H16M4 8.500H16M4 12.500H11" stroke="#06161b" strokeWidth="1.300" /></svg>
        <i className="ml-[25px] mr-[5px] w-px h-[38px] bg-[#5b6b70]" />
      </div>
    </footer>
  );
}

export default function App() {
  return (
    <div className="w-[1600px] h-[900px] overflow-hidden flex flex-col font-['Open_Sans',sans-serif]">
      <div className="h-[862px] flex">
        <div className="w-[1150px] h-[862px] border-l border-b border-[#333] bg-[#575757] flex flex-col overflow-hidden shrink-0">
          <TitleBar />
          <AddressBar />
          <Bookmarks />
          <Page />
          <HScroll />
        </div>
        <Flyout />
      </div>
      <Taskbar />
    </div>
  );
}
